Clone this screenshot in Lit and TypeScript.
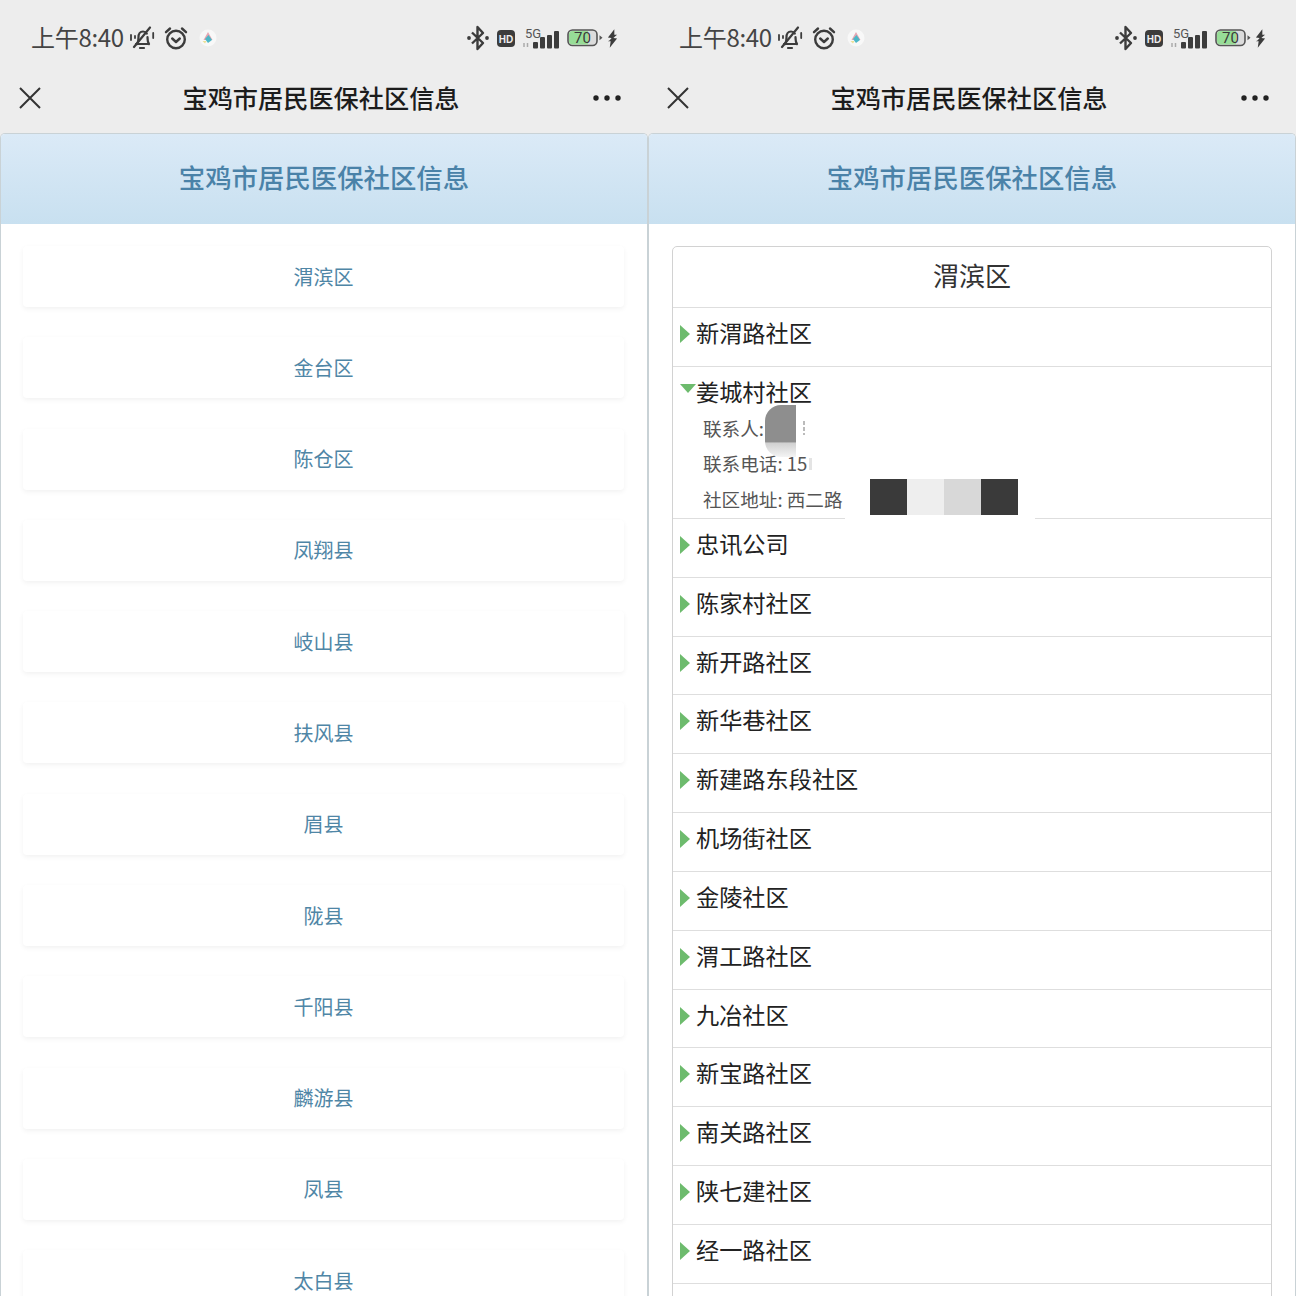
import { LitElement, html, css } from "lit";
import { customElement } from "lit/decorators.js";

const DISTRICTS = ["渭滨区","金台区","陈仓区","凤翔县","岐山县","扶风县","眉县","陇县","千阳县","麟游县","凤县","太白县"];
const AFTER = ["忠讯公司","陈家村社区","新开路社区","新华巷社区","新建路东段社区","机场街社区","金陵社区","渭工路社区","九冶社区","新宝路社区","南关路社区","陕七建社区","经一路社区"];

@customElement("app-root")
export class AppRoot extends LitElement {
  static styles = css`
    :host { display: block; width: 1296px; height: 1296px; overflow: hidden; background: #fff;
      font-family: "Noto Sans CJK SC", "Noto Sans", sans-serif; }
    .split { display: grid; grid-template-columns: 648px 648px; height: 1296px; overflow: hidden; }
    .phone { height: 1296px; overflow: hidden; background: #ededed; display: flex; flex-direction: column; }
    .status { height: 76px; flex: none; display: flex; align-items: center; padding: 0 30px 0 31px; color: #3c3c3c; }
    .time { font-size: 24px; line-height: 28px; padding-bottom: 2px; color: #444; white-space: nowrap; letter-spacing: -0.3px; }
    .left-icons { display: flex; align-items: center; gap: 9px; margin-left: 5px; }
    .spring { flex: 1; }
    .right-icons { display: flex; align-items: center; gap: 7px; }
    .nav { height: 44px; flex: none; margin-bottom: 13px; display: flex; align-items: center; justify-content: space-between; padding: 0 27px 0 18px; position: relative; }
    .nav-title { position: absolute; left: 0; right: 6px; text-align: center; font-size: 25.2px; font-weight: 500; line-height: 42px; top: 0; color: #1c1c1c; }
    .panel { flex: 1; min-height: 0; background: #fff; border: 1px solid #c9d2d6; border-bottom: 0; border-radius: 5px 5px 0 0; overflow: hidden; }
    .head { height: 90px; box-sizing: border-box; padding-bottom: 6px; background: linear-gradient(#dbeaf7, #c8e0f0); color: #4a82a8; display: flex; align-items: center; justify-content: center; font-size: 26.4px; font-weight: 500; }
    .list { padding: 22px 23px 0 22px; display: flex; flex-direction: column; gap: 30.3px; }
    .card { height: 61px; box-sizing: border-box; padding-bottom: 1px; flex: none; border-radius: 4px; background: #fff; box-shadow: 0 2px 5px rgba(0,0,0,.055); color: #4f86a6; font-size: 20px; display: flex; align-items: center; justify-content: center; }
    .box { margin: 22px 23px 0; border: 1px solid #d2d2d2; border-radius: 5px 5px 0 0; }
    .box-title { height: 61px; box-sizing: border-box; padding-bottom: 6px; display: flex; align-items: center; justify-content: center; font-size: 26px; color: #333; border-bottom: 1px solid #dedede; }
    .row { height: 58.85px; box-sizing: border-box; border-bottom: 1px solid #dedede; padding-left: 7px; display: flex; align-items: flex-start; }
    .row-line { display: flex; align-items: center; height: 52px; }
    .tri-r { width: 0; height: 0; border-left: 10px solid #6dbb6d; border-top: 9px solid transparent; border-bottom: 9px solid transparent; margin-right: 6px; }
    .tri-d { width: 0; height: 0; border-top: 9px solid #6dbb6d; border-left: 8px solid transparent; border-right: 8px solid transparent; margin-top: -8px; }
    .name { font-size: 23.2px; color: #222; line-height: 48px; padding-bottom: 4px; white-space: nowrap; }
    .open { height: 152px; position: relative; display: block; }
    .detail { font-size: 18.6px; line-height: 35.5px; color: #555; padding-left: 23px; white-space: nowrap; }
    .details { margin-top: -9px; }
    .blob { position: absolute; left: 92px; top: 38px; width: 31px; height: 52px; border-radius: 16px 0 0 16px; background: linear-gradient(#8e8e8e 0, #8e8e8e 71%, #d0d0d0 73%, #f4f4f4 100%); }
    .frag { position: absolute; left: 130px; top: 54px; width: 2px; height: 14px; background: repeating-linear-gradient(#bbb 0 4px, #fff 4px 6px); }
    .frag2 { position: absolute; left: 136px; top: 91px; width: 3px; height: 12px; background: #e4e4e4; }
    .mask { position: absolute; left: 172px; top: 100px; width: 190px; height: 53px; background: #fff; }
    .pix { position: absolute; left: 197px; top: 112px; display: flex; }
    .pix span { width: 37px; height: 36px; display: block; }
    .dark { background: #3a3a3a; }
    .pale { background: #eeeeee; }
    .mid { background: #d8d8d8; }
    .sq { display: block; }
  `;

  private statusBar() {
    return html`<div class="status">
      <span class="time">上午8:40</span>
      <span class="left-icons">
        <svg class="sq" width="26" height="24" viewBox="0 0 26 24" fill="none" stroke="#3c3c3c" stroke-width="2.2" stroke-linecap="round">
          <path d="M7 18h12.500M8 18c1.500-2 1.500-4 1.500-7 0-3 1.500-5.500 4.500-5.500 1.500 0 3 .7 3.800 2M18.500 11c0 3 0 5 1.500 7M11 22h4"/>
          <path d="M5 21 21 1.500"/>
          <path d="M2 9v5M6 10v2M24.200 7v5" stroke-width="1.800"/>
        </svg>
        <svg class="sq" width="24" height="24" viewBox="0 0 24 24" fill="none" stroke="#3c3c3c" stroke-width="2.4" stroke-linecap="round" stroke-linejoin="round">
          <circle cx="12" cy="13.500" r="8.800"/>
          <path d="M8.200 12.500 12 16l3.800-3.500M2 6.200 6 2.500M22 6.200 18 2.500"/>
        </svg>
        <svg class="sq" style="margin-left:2px" width="18" height="18" viewBox="0 0 18 18">
          <circle cx="9" cy="9" r="8.500" fill="#f8f8f8"/>
          <path d="M9 3l4.500 8H4.500z" fill="#e6a6b2"/>
          <path d="M6 10 9.500 6 13 11l-4 3z" fill="#4db7c6"/>
          <path d="M3.500 12h4l-1.500 2.500z" fill="#ece096"/>
        </svg>
      </span>
      <span class="spring"></span>
      <span class="right-icons">
        <svg class="sq" width="22" height="26" viewBox="0 0 22 26" fill="none" stroke="#3c3c3c" stroke-width="2.400" stroke-linejoin="round">
          <path d="M5 7.500 16 18l-5.500 6V2L16 8 5 18.500"/>
          <circle cx="2" cy="13" r="1.900" fill="#3c3c3c" stroke="none"/>
          <circle cx="20" cy="13" r="1.900" fill="#3c3c3c" stroke="none"/>
        </svg>
        <svg class="sq" style="margin-left:1px" width="18" height="17" viewBox="0 0 18 17">
          <rect width="18" height="17" rx="4" fill="#3c3c3c"/>
          <text x="9" y="12.500" text-anchor="middle" font-family="Liberation Sans" font-weight="700" font-size="10" fill="#eee">HD</text>
        </svg>
        <svg class="sq" width="38" height="30" viewBox="0 -4 38 30">
          <text x="3" y="11" font-family="Roboto" font-size="13" fill="#555">5G</text>
          <path d="M2 20v-4M5.500 16v4" stroke="#aaa" stroke-width="1.500"/>
          <rect x="11" y="15" width="5" height="6.500" rx="1" fill="#3c3c3c"/>
          <rect x="18" y="10" width="5" height="11.500" rx="1" fill="#3c3c3c"/>
          <rect x="25" y="8" width="5" height="13.500" rx="1" fill="#3c3c3c"/>
          <rect x="32" y="4" width="5" height="17.500" rx="1" fill="#3c3c3c"/>
        </svg>
        <svg class="sq" width="36" height="18" viewBox="0 0 36 18">
          <rect x="1" y="1" width="29" height="15.500" rx="4.500" fill="#dcdcdc" stroke="#555" stroke-width="1.600"/>
          <path d="M2 5.500a3.500 3.500 0 0 1 3.500-3.500H21v13.500H5.500A3.500 3.500 0 0 1 2 12z" fill="#97dd97"/>
          <text x="15.500" y="14" text-anchor="middle" font-family="Roboto" font-size="15" fill="#3a3a3a">70</text>
          <path d="M32.500 6.200l3 2.500-3 2.500z" fill="#555"/>
        </svg>
        <svg class="sq" style="margin-left:-3px" width="11" height="19" viewBox="0 0 12 20">
          <path d="M8 0 1 9l4 .5-2 2.500L1 13h3l-1 7 8-10-4-.5 2-2L11 6H8z" fill="#3c3c3c"/>
        </svg>
      </span>
    </div>`;
  }

  private nav() {
    return html`<div class="nav">
      <svg class="sq" width="24" height="24" viewBox="0 0 24 24" fill="none" stroke="#333" stroke-width="2"><path d="M2 2l20 20M22 2 2 22"/></svg>
      <span class="nav-title">宝鸡市居民医保社区信息</span>
      <svg class="sq" width="28" height="8" viewBox="0 0 28 8" fill="#222"><circle cx="3" cy="4" r="2.700"/><circle cx="14" cy="4" r="2.700"/><circle cx="25" cy="4" r="2.700"/></svg>
    </div>`;
  }

  private row(n: string) {
    return html`<div class="row"><div class="row-line"><span class="tri-r"></span><span class="name">${n}</span></div></div>`;
  }

  render() {
    return html`<div class="split">
      <section class="phone">
        ${this.statusBar()}${this.nav()}
        <div class="panel">
          <div class="head">宝鸡市居民医保社区信息</div>
          <div class="list">${DISTRICTS.map((d) => html`<div class="card">${d}</div>`)}</div>
        </div>
      </section>
      <section class="phone">
        ${this.statusBar()}${this.nav()}
        <div class="panel">
          <div class="head">宝鸡市居民医保社区信息</div>
          <div class="box">
            <div class="box-title">渭滨区</div>
            ${this.row("新渭路社区")}
            <div class="row open">
              <div class="row-line"><span class="tri-d"></span><span class="name">姜城村社区</span></div>
              <div class="details">
                <div class="detail">联系人:</div>
                <div class="detail">联系电话: 15</div>
                <div class="detail">社区地址: 西二路</div>
              </div>
              <div class="mask"></div>
              <div class="blob"></div>
              <div class="frag"></div>
              <div class="frag2"></div>
              <div class="pix"><span class="dark"></span><span class="pale"></span><span class="mid"></span><span class="dark"></span></div>
            </div>
            ${AFTER.map((n) => this.row(n))}
            <div class="row"></div>
          </div>
        </div>
      </section>
    </div>`;
  }
}
